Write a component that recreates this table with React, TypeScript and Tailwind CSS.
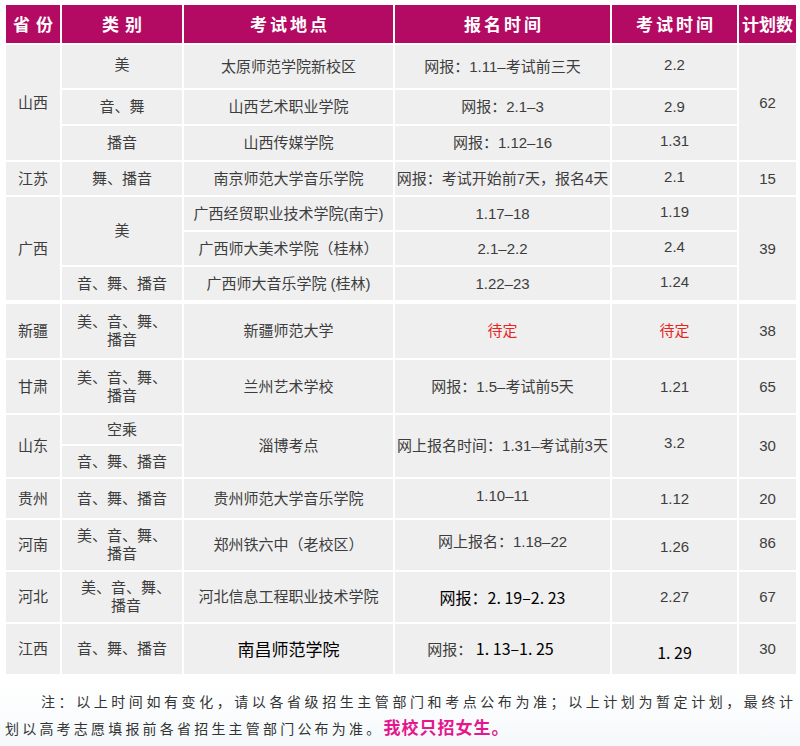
import React from "react";

const cell = "border-2 border-white bg-[#efefef] text-center align-middle p-0 text-[15px] leading-[18px] text-[#3d3d3d]";
const head = "border-2 border-white bg-[#b30b63] text-center align-middle p-0 text-white font-bold text-[17px] font-['Noto_Sans_CJK_SC',sans-serif]";
const red = "text-[#e8261e]";
const dark = "text-black font-['Noto_Sans_CJK_SC',sans-serif]";

export default function App() {
  return (
    <div className="w-[800px] h-[746px] bg-white font-['Liberation_Sans','Noto_Sans_CJK_SC',sans-serif] overflow-hidden">
      <div className="pt-[3px] pl-[4px]">
        <table className="table-fixed border-collapse w-[792px]">
          <colgroup>
            <col className="w-[56px]" />
            <col className="w-[122px]" />
            <col className="w-[211px]" />
            <col className="w-[217px]" />
            <col className="w-[127px]" />
            <col className="w-[59px]" />
          </colgroup>
          <thead>
            <tr className="h-[40px]">
              <th className={`${head} tracking-[6px] pl-[6px]`}>省份</th>
              <th className={`${head} tracking-[6px] pl-[6px]`}>类别</th>
              <th className={`${head} tracking-[3px] pl-[3px]`}>考试地点</th>
              <th className={`${head} tracking-[3px] pl-[3px]`}>报名时间</th>
              <th className={`${head} tracking-[3px] pl-[3px]`}>考试时间</th>
              <th className={head}>计划数</th>
            </tr>
          </thead>
          <tbody>
            {/* 山西 */}
            <tr className="h-[45px]">
              <td className={cell} rowSpan={3}>山西</td>
              <td className={`${cell} pb-[4px]`}>美</td>
              <td className={cell}>太原师范学院新校区</td>
              <td className={cell}>网报：1.11–考试前三天</td>
              <td className={`${cell} pb-[4px]`}>2.2</td>
              <td className={cell} rowSpan={3}>62</td>
            </tr>
            <tr className="h-[36px]">
              <td className={cell}>音、舞</td>
              <td className={cell}>山西艺术职业学院</td>
              <td className={cell}>网报：2.1–3</td>
              <td className={cell}>2.9</td>
            </tr>
            <tr className="h-[36px]">
              <td className={cell}>播音</td>
              <td className={cell}>山西传媒学院</td>
              <td className={cell}>网报：1.12–16</td>
              <td className={`${cell} pb-[4px]`}>1.31</td>
            </tr>
            {/* 江苏 */}
            <tr className="h-[35px]">
              <td className={cell}>江苏</td>
              <td className={cell}>舞、播音</td>
              <td className={cell}>南京师范大学音乐学院</td>
              <td className={cell}>网报：考试开始前7天，报名4天</td>
              <td className={`${cell} pb-[3px]`}>2.1</td>
              <td className={cell}>15</td>
            </tr>
            {/* 广西 */}
            <tr className="h-[35px]">
              <td className={cell} rowSpan={3}>广西</td>
              <td className={cell} rowSpan={2}>美</td>
              <td className={cell}>广西经贸职业技术学院(南宁)</td>
              <td className={cell}>1.17–18</td>
              <td className={`${cell} pb-[3px]`}>1.19</td>
              <td className={cell} rowSpan={3}>39</td>
            </tr>
            <tr className="h-[35px]">
              <td className={cell}>广西师大美术学院（桂林）</td>
              <td className={cell}>2.1–2.2</td>
              <td className={`${cell} pb-[3px]`}>2.4</td>
            </tr>
            <tr className="h-[36px]">
              <td className={cell}>音、舞、播音</td>
              <td className={cell}>广西师大音乐学院 (桂林)</td>
              <td className={cell}>1.22–23</td>
              <td className={`${cell} pb-[3px]`}>1.24</td>
            </tr>
            {/* 新疆 */}
            <tr className="h-[57px]">
              <td className={`${cell} border-t-4`}>新疆</td>
              <td className={`${cell} border-t-4`}>美、音、舞、<br />播音</td>
              <td className={`${cell} border-t-4`}>新疆师范大学</td>
              <td className={`${cell} border-t-4 ${red}`}>待定</td>
              <td className={`${cell} border-t-4 ${red}`}>待定</td>
              <td className={`${cell} border-t-4`}>38</td>
            </tr>
            {/* 甘肃 */}
            <tr className="h-[55px]">
              <td className={cell}>甘肃</td>
              <td className={cell}>美、音、舞、<br />播音</td>
              <td className={cell}>兰州艺术学校</td>
              <td className={cell}>网报：1.5–考试前5天</td>
              <td className={cell}>1.21</td>
              <td className={cell}>65</td>
            </tr>
            {/* 山东 */}
            <tr className="h-[31px]">
              <td className={cell} rowSpan={2}>山东</td>
              <td className={cell}>空乘</td>
              <td className={cell} rowSpan={2}>淄博考点</td>
              <td className={cell} rowSpan={2}>网上报名时间：1.31–考试前3天</td>
              <td className={`${cell} pb-[6px]`} rowSpan={2}>3.2</td>
              <td className={cell} rowSpan={2}>30</td>
            </tr>
            <tr className="h-[33px]">
              <td className={cell}>音、舞、播音</td>
            </tr>
            {/* 贵州 */}
            <tr className="h-[41px]">
              <td className={cell}>贵州</td>
              <td className={cell}>音、舞、播音</td>
              <td className={cell}>贵州师范大学音乐学院</td>
              <td className={`${cell} pb-[6px]`}>1.10–11</td>
              <td className={cell}>1.12</td>
              <td className={cell}>20</td>
            </tr>
            {/* 河南 */}
            <tr className="h-[52px]">
              <td className={cell}>河南</td>
              <td className={cell}>美、音、舞、<br />播音</td>
              <td className={cell}>郑州铁六中（老校区）</td>
              <td className={`${cell} pb-[6px]`}>网上报名：1.18–22</td>
              <td className={`${cell} pt-[4px]`}>1.26</td>
              <td className={`${cell} pb-[4px]`}>86</td>
            </tr>
            {/* 河北 */}
            <tr className="h-[52px]">
              <td className={cell}>河北</td>
              <td className={`${cell} pl-[8px]`}>美、音、舞、<br />播音</td>
              <td className={cell}>河北信息工程职业技术学院</td>
              <td className={`${cell} ${dark} text-[16px]`}>网报：2. 19–2. 23</td>
              <td className={cell}>2.27</td>
              <td className={cell}>67</td>
            </tr>
            {/* 江西 */}
            <tr className="h-[52px]">
              <td className={cell}>江西</td>
              <td className={cell}>音、舞、播音</td>
              <td className={`${cell} ${dark} text-[17px]`}>南昌师范学院</td>
              <td className={`${cell} pr-[24px]`}>
                网报：<span className={`${dark} text-[16px]`}> 1. 13–1. 25</span>
              </td>
              <td className={`${cell} ${dark} text-[16px] pt-[6px]`}>1. 29</td>
              <td className={cell}>30</td>
            </tr>
          </tbody>
        </table>
      </div>

      <div className="mt-[6px] px-[5px] pt-[6px] h-[70px] bg-linear-to-b from-white to-[#f4f8fa] font-['Noto_Sans_CJK_SC',sans-serif] text-[14px] leading-[26px] text-[#333]">
        <p className="pl-[36px] pr-[2px] text-justify [text-align-last:justify]">
          注：以上时间如有变化，请以各省级招生主管部门和考点公布为准；以上计划为暂定计划，最终计
        </p>
        <p className="tracking-[3.2px]">
          划以高考志愿填报前各省招生主管部门公布为准。
          <span className="text-[#e5178f] font-bold text-[17px] tracking-[1px]">我校只招女生。</span>
        </p>
      </div>
    </div>
  );
}
